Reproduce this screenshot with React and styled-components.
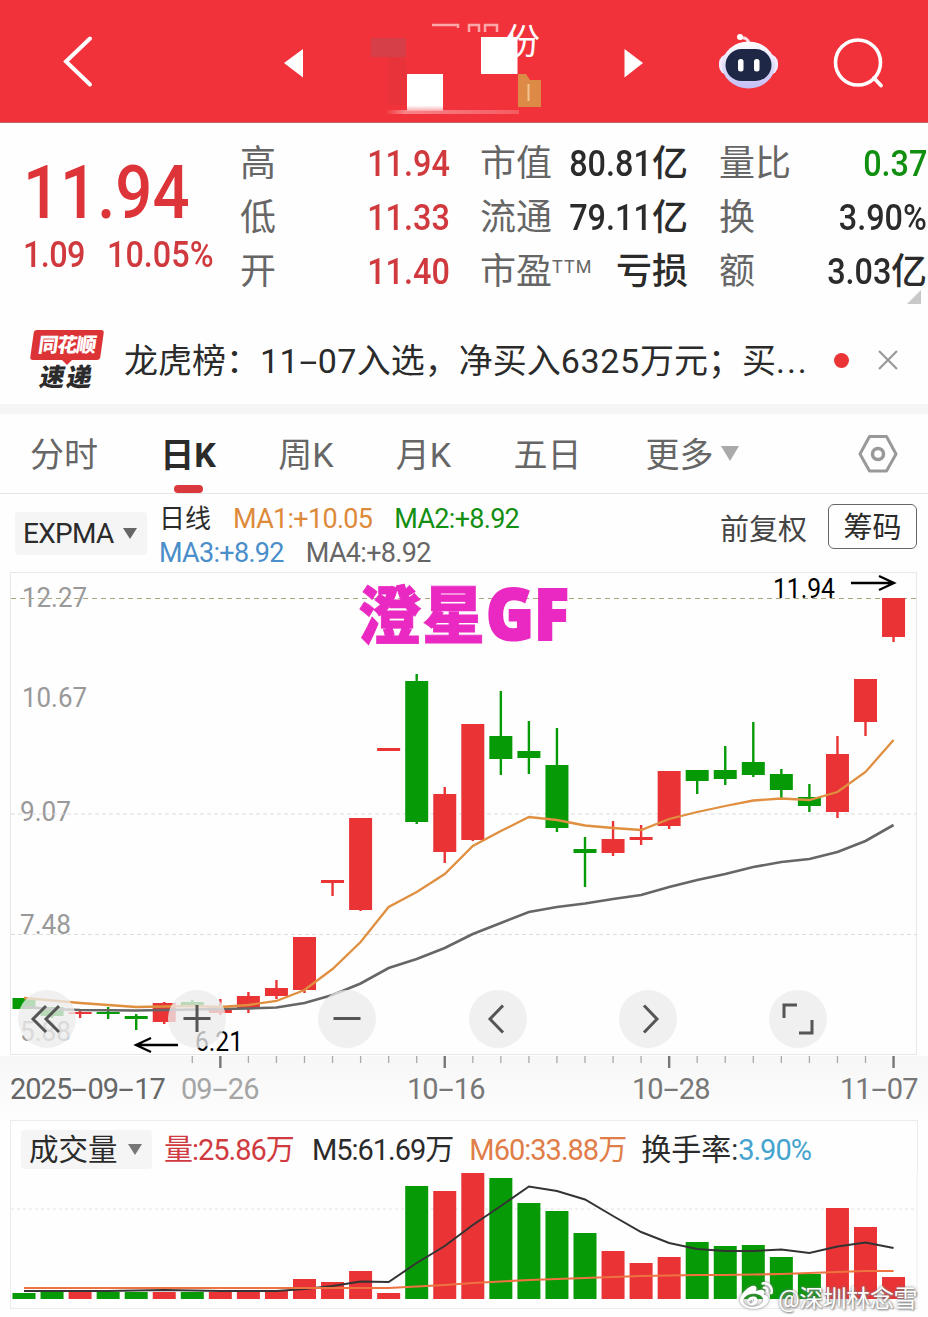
import React from 'react';
import styled, { createGlobalStyle } from 'styled-components';
import { FaWeibo } from 'react-icons/fa';

const FONT = `Roboto, 'Noto Sans CJK SC', sans-serif`;
const RED = '#e93335';
const GREEN = '#079a07';

const GlobalStyle = createGlobalStyle`
  body {
    margin: 0;
    background: #fefefe;
    font-family: ${FONT};
  }
`;

const Page = styled.div`
  width: 928px;
  height: 1317px;
  overflow: hidden;
`;

/* ---------- header ---------- */

const Header = styled.header`
  display: flex;
  height: 123px;
  background: #f1323a;
  border-bottom: 1px solid #b9656a;
  box-sizing: border-box;
`;

const HeaderArt = styled.svg`
  display: block;
  width: 928px;
  height: 122px;
`;

/* ---------- quote ---------- */

const Quote = styled.section`
  display: flex;
  height: 189px;
  padding-top: 14px;
  box-sizing: border-box;
`;

const PriceBlock = styled.div`
  width: 240px;
  flex-shrink: 0;
  padding-left: 23px;
  box-sizing: border-box;
  color: #dc3438;
`;

const Price = styled.div`
  margin-top: 19px;
  height: 72px;
  line-height: 72px;
  font-size: 75px;
  font-weight: 500;
  transform: scaleX(0.87);
  transform-origin: left;
`;

const Change = styled.div`
  display: flex;
  margin-top: 7px;
  line-height: 40px;
  font-size: 36px;
  font-weight: 500;
  color: #d0393d;
`;

const ChangeValue = styled.span`
  width: ${(p) => p.$width}px;
  letter-spacing: ${(p) => p.$ls || 0}px;
  transform: scaleX(0.9);
  transform-origin: left;
`;

const Stats = styled.div`
  display: flex;
  flex-shrink: 0;
`;

const StatsColumn = styled.div`
  display: flex;
  flex-direction: column;
  width: ${(p) => p.$width}px;
  margin-right: ${(p) => p.$gap || 0}px;
`;

const Stat = styled.div`
  display: flex;
  justify-content: space-between;
  height: 54px;
  line-height: 55px;
  font-size: 36px;
  color: #666;
  white-space: nowrap;
`;

const StatValue = styled.span`
  font-weight: 500;
  color: ${(p) => p.$color || '#2b2b2b'};
`;

const Num = styled.span`
  display: inline-block;
  transform: scaleX(0.9);
  transform-origin: right;
`;

const Han = styled.span`
  font-size: ${(p) => p.$size}px;
  letter-spacing: 0;
`;

const Sup = styled.span`
  font-size: 18px;
  letter-spacing: 1px;
  vertical-align: 11px;
  line-height: 1;
`;

const Corner = styled.div`
  width: 0;
  height: 0;
  margin: -9px 6px 0 auto;
  border-left: 14px solid transparent;
  border-bottom: 14px solid #c8c8c8;
`;

/* ---------- news ---------- */

const News = styled.section`
  display: flex;
  align-items: center;
  height: 88px;
  padding: 4px 29px 0 30px;
  border-bottom: 10px solid #f5f5f5;
`;

const Badge = styled.div`
  display: flex;
  flex-direction: column;
  align-items: center;
  width: 74px;
  margin-right: 20px;
`;

const BadgeTop = styled.div`
  width: 70px;
  height: 30px;
  line-height: 30px;
  background: #dc3436;
  border-radius: 3px;
  color: #fff;
  font-size: 20px;
  font-weight: 900;
  letter-spacing: -1px;
  text-align: center;
  transform: skewX(-8deg);
`;

const BadgePointer = styled.div`
  width: 0;
  height: 0;
  border: 5px solid transparent;
  border-top-color: #dc3436;
  border-bottom-width: 0;
`;

const BadgeBottom = styled.div`
  line-height: 25px;
  font-size: 25px;
  font-weight: 900;
  letter-spacing: 2px;
  color: #2b2b2b;
  transform: skewX(-10deg);
`;

const Headline = styled.div`
  width: 706px;
  padding-top: 2px;
  font-size: 34px;
  line-height: 50px;
  color: #2b2b2b;
  white-space: nowrap;
`;

const Digits = styled.span`
  letter-spacing: ${(p) => p.$ls}px;
`;

const Dash = styled.span`
  display: inline-block;
  width: 0.56em;
  text-align: center;
  letter-spacing: 0;
  transform: scaleX(1.9);
`;

const Dot = styled.div`
  width: 15px;
  height: 15px;
  margin: 0 29px 0 4px;
  border-radius: 50%;
  background: #ea3436;
`;

/* ---------- tabs ---------- */

const Tabs = styled.nav`
  display: flex;
  align-items: flex-start;
  height: 79px;
  padding: 0 30px;
  border-bottom: 1px solid #e6e6e6;
`;

const Tab = styled.div`
  display: flex;
  flex-direction: column;
  align-items: center;
  margin-right: ${(p) => p.$gap ?? 62.3}px;
  height: 79px;
  line-height: 82px;
  font-size: 34px;
  font-weight: ${(p) => (p.$active ? 700 : 400)};
  color: ${(p) => (p.$active ? '#2b2b2b' : '#666')};

  &::after {
    content: '';
    display: ${(p) => (p.$active ? 'block' : 'none')};
    width: 29px;
    height: 8px;
    margin-top: -11px;
    flex-shrink: 0;
    border-radius: 4px;
    background: #d9393c;
  }
`;

const Caret = styled.span`
  width: 0;
  height: 0;
  border: ${(p) => p.$size}px solid transparent;
  border-top: ${(p) => p.$tall}px solid ${(p) => p.$color};
  border-bottom: 0;
`;

const MoreCaret = styled(Caret)`
  margin: 32px 119px 0 7px;
`;

const Settings = styled.svg`
  margin-top: 20px;
`;

/* ---------- indicator row ---------- */

const Indicators = styled.section`
  display: flex;
  height: 78px;
  padding: 0 11px 0 15px;
`;

const Picker = styled.div`
  display: flex;
  align-items: center;
  justify-content: space-between;
  width: ${(p) => p.$width}px;
  height: ${(p) => p.$height}px;
  margin-top: ${(p) => p.$top}px;
  padding: 0 10px 0 8px;
  box-sizing: border-box;
  flex-shrink: 0;
  border-radius: 4px;
  background: #f5f5f5;
  font-size: ${(p) => p.$font}px;
  letter-spacing: ${(p) => p.$ls || 0}px;
  color: #2b2b2b;
`;

const Averages = styled.div`
  width: 561px;
  margin-left: 12px;
  padding-top: 8px;
`;

const AverageRow = styled.div`
  display: flex;
  height: 34px;
  line-height: 34px;
  gap: 22px;
  font-size: 27px;
  letter-spacing: -0.7px;
  white-space: nowrap;
`;

const Average = styled.span`
  color: ${(p) => p.$color};
`;

const Adjust = styled.div`
  width: 108px;
  line-height: 73px;
  font-size: 29px;
  color: #444;
`;

const ChipButton = styled.div`
  width: 89px;
  height: 45px;
  margin-top: 10px;
  box-sizing: border-box;
  border: 1.5px solid #666;
  border-radius: 6px;
  line-height: 46px;
  text-align: center;
  font-size: 29px;
  color: #2b2b2b;
`;

/* ---------- charts ---------- */

const PriceChart = styled.section`
  position: relative;
  height: 484px;
`;

const Plot = styled.svg`
  display: block;
  font-family: ${FONT};
`;

const Toolbar = styled.div`
  position: absolute;
  left: 18px;
  top: 418px;
  display: flex;
  gap: 92.2px;
`;

const RoundButton = styled.div`
  width: 58px;
  height: 58px;
  border-radius: 50%;
  background: rgba(236, 236, 236, 0.78);

  svg {
    display: block;
  }
`;

const Axis = styled.section`
  height: 64px;
  background: linear-gradient(#f7f7f7, #fdfdfd);
`;

const Dates = styled.div`
  display: grid;
  grid-template-columns: 171px 226px 225px 208px auto;
  padding-left: 10px;
  padding-top: 1px;
  line-height: 40px;
  font-size: 29px;
  letter-spacing: -1px;
  white-space: nowrap;
`;

const DateLabel = styled.span`
  color: ${(p) => p.$color || '#777'};
`;

const VolumePanel = styled.section`
  position: relative;
  height: 189px;
`;

const VolumeInfo = styled.div`
  display: flex;
  height: 53px;
  margin: 0 10px;
  padding-left: 10px;
  border: 1px solid #ececec;
  border-bottom: 0;
  box-sizing: border-box;
  line-height: 58px;
  font-size: 29px;
  letter-spacing: -1px;
  white-space: nowrap;
`;

const VolumeText = styled.span`
  margin-left: ${(p) => p.$gap}px;
  color: ${(p) => p.$color};
`;

const Watermark = styled.div`
  position: absolute;
  left: 740px;
  top: 158px;
  display: flex;
  align-items: center;
  gap: 5px;
  height: 36px;
  font-size: 24px;
  letter-spacing: -0.4px;
  color: #fff;
  white-space: nowrap;
  text-shadow: 0 0 3px #777, 1px 1px 2px #888;

  svg {
    filter: drop-shadow(0 0 1.5px #777);
  }
`;

const STEP = 28.05;
const xAt = (i) => 24 + STEP * i;

// [up, high, bodyTop, bodyBottom, low]
const candles = [
  [0, 998, 998, 1009, 1009],
  [0, 1007, 1007, 1016, 1018],
  [1, 1011, 1012, 1014, 1018],
  [0, 1007, 1012, 1014, 1019],
  [0, 1014, 1016, 1019, 1030],
  [1, 1002, 1003, 1022, 1024],
  [0, 1000, 1002, 1006, 1006],
  [1, 999, 1008, 1013, 1015],
  [1, 992, 996, 1008, 1013],
  [1, 980, 988, 996, 999],
  [1, 937, 937, 990, 993],
  [1, 880, 880, 883, 896],
  [1, 818, 818, 910, 911],
  [1, 748, 748, 751, 751],
  [0, 674, 681, 822, 824],
  [1, 787, 794, 852, 863],
  [1, 724, 724, 840, 841],
  [0, 691, 736, 759, 775],
  [0, 721, 751, 758, 774],
  [0, 728, 765, 828, 832],
  [0, 837, 849, 853, 887],
  [1, 821, 839, 853, 856],
  [1, 825, 837, 840, 845],
  [1, 771, 771, 826, 829],
  [0, 770, 770, 781, 794],
  [0, 746, 770, 779, 785],
  [0, 722, 762, 775, 777],
  [0, 769, 774, 790, 798],
  [0, 784, 797, 806, 812],
  [1, 736, 754, 812, 818],
  [1, 679, 679, 722, 736],
  [1, 598, 598, 637, 642],
];

const ma1 = [
  998, 1000.5, 1003, 1005, 1007, 1006.5, 1006, 1007, 1005, 1001, 990, 969, 942, 907, 892, 874, 846,
  831, 817, 820, 825.5, 828, 830, 819, 812, 806, 800.5, 798.5, 800, 792, 772, 740,
];

const ma4 = [
  1007, 1009, 1010, 1010.3, 1010.5, 1010, 1009.5, 1009, 1008.5, 1007.5, 1003, 995, 983.5, 968, 959,
  948, 934, 923, 912, 907, 903.5, 899, 895, 887, 880, 874, 867, 862, 859, 852, 841, 825,
];

// [up, top]
const volumes = [
  [0, 1293], [0, 1292], [1, 1292], [0, 1292], [0, 1292], [1, 1292], [0, 1292], [1, 1292],
  [1, 1292], [1, 1291], [1, 1279], [1, 1282], [1, 1271], [1, 1293], [0, 1186], [1, 1191],
  [1, 1173], [0, 1178], [0, 1203], [0, 1211], [0, 1233], [1, 1251], [1, 1263], [1, 1257],
  [0, 1242], [0, 1246], [0, 1245], [0, 1257], [0, 1274], [1, 1208], [1, 1227], [1, 1277],
];

const vol5 = [
  1291, 1291, 1291, 1291, 1290.5, 1290, 1290.5, 1291, 1291, 1291, 1289, 1286, 1281.5, 1282, 1263,
  1246, 1225, 1206, 1186.5, 1191, 1199.5, 1216, 1232, 1243, 1249, 1251, 1251, 1249.5, 1253, 1246.5,
  1242.5, 1248,
];

const vol60 = [
  1288, 1288, 1288, 1288, 1288, 1288, 1288, 1288, 1288, 1288, 1288, 1288, 1288, 1288, 1286.5, 1285,
  1283, 1281.5, 1280, 1279, 1278, 1277, 1276, 1275.5, 1275, 1275, 1274.5, 1274, 1273, 1272, 1271, 1271,
];

const line = (values) => values.map((y, i) => `${xAt(i)},${y}`).join(' ');

const priceLabels = [
  ['12.27', 22, 607, 65],
  ['10.67', 22, 707, 65],
  ['9.07', 20, 821, 51],
  ['7.48', 20, 934, 51],
  ['5.88', 20, 1041, 51],
];

const HeaderBar = () => (
  <Header>
    <HeaderArt viewBox="0 0 928 122">
      <defs>
        <linearGradient id="shell" x1="0" y1="0" x2="0" y2="1">
          <stop offset="0" stopColor="#fff" />
          <stop offset="1" stopColor="#c3bdf5" />
        </linearGradient>
        <linearGradient id="fade" x1="0" y1="0" x2="0" y2="1">
          <stop offset="0.85" stopColor="#fff" />
          <stop offset="1" stopColor="#f9a9ac" />
        </linearGradient>
        <linearGradient id="smear" x1="0" y1="0" x2="1" y2="0">
          <stop offset="0" stopColor="#fba7aa" stopOpacity="0" />
          <stop offset="0.15" stopColor="#fba7aa" />
          <stop offset="1" stopColor="#fba7aa" stopOpacity="0.5" />
        </linearGradient>
      </defs>
      <path d="M90 38.500 66 61.500 90 84.500" fill="none" stroke="#fff" strokeWidth="4" strokeLinecap="round" />
      <path d="M303 49v28.500L284 63z" fill="#fff" />
      <path d="M624.500 49v28.500L643 63z" fill="#fff" />

      {/* masked stock name */}
      <rect x="371" y="38" width="35" height="19" fill="#d63f47" />
      <rect x="388" y="57" width="18" height="48" fill="#e9333b" />
      <text x="505" y="54" fontSize="35" fill="#fff" fontFamily="Noto Sans CJK SC">份</text>
      <path d="M432 25h26v3M469 32v-7h10v7M485 32v-7h12v7" fill="none" stroke="#fba7aa" strokeWidth="2.500" />
      <rect x="407" y="74" width="36" height="37" fill="url(#fade)" />
      <rect x="481" y="37" width="36.500" height="37" fill="#fff" />
      <path d="M518 74h8l4 6h11v27h-23z" fill="#dd8a47" />
      <path d="M528.500 84v17" stroke="#f3c48f" strokeWidth="2" />
      <rect x="385" y="110" width="134" height="4" fill="url(#smear)" opacity="0.7" />

      {/* assistant robot */}
      <path d="M740 38q8-1 8.500 5" fill="none" stroke="#fbdfe6" strokeWidth="3" />
      <circle cx="740" cy="37" r="3" fill="#fff" />
      <rect x="719" y="54" width="59" height="21" rx="9" fill="#f1eaff" />
      <ellipse cx="748.500" cy="65" rx="26.500" ry="23.500" fill="url(#shell)" />
      <rect x="725.500" y="49" width="46" height="32" rx="16" fill="#1e2746" />
      <rect x="738" y="59" width="5.500" height="12.500" rx="2.500" fill="#fff" />
      <rect x="754" y="59" width="5.500" height="12.500" rx="2.500" fill="#fff" />

      <circle cx="858" cy="62.500" r="22.500" fill="none" stroke="#fff" strokeWidth="3.600" />
      <path d="m874 78 7 7.500" stroke="#fff" strokeWidth="3.800" strokeLinecap="round" />
    </HeaderArt>
  </Header>
);

const QuoteBlock = () => (
  <Quote>
    <PriceBlock>
      <Price>11.94</Price>
      <Change>
        <ChangeValue $width={84} $ls={-0.7}>1.09</ChangeValue>
        <ChangeValue>10.05%</ChangeValue>
      </Change>
    </PriceBlock>
    <Stats>
      <StatsColumn $width={210} $gap={30}>
        <Stat>高<StatValue $color="#d0393d"><Num>11.94</Num></StatValue></Stat>
        <Stat>低<StatValue $color="#d0393d"><Num>11.33</Num></StatValue></Stat>
        <Stat>开<StatValue $color="#d0393d"><Num>11.40</Num></StatValue></Stat>
      </StatsColumn>
      <StatsColumn $width={208} $gap={31}>
        <Stat>市值<StatValue><Num>80.81</Num>亿</StatValue></Stat>
        <Stat>流通<StatValue><Num>79.11</Num>亿</StatValue></Stat>
        <Stat>
          <span>市盈<Sup>TTM</Sup></span>
          <StatValue>亏损</StatValue>
        </Stat>
      </StatsColumn>
      <StatsColumn $width={208}>
        <Stat>量比<StatValue $color="#108f10"><Num>0.37</Num></StatValue></Stat>
        <Stat>换<StatValue><Num>3.90%</Num></StatValue></Stat>
        <Stat>额<StatValue><Num>3.03</Num>亿</StatValue></Stat>
        <Corner />
      </StatsColumn>
    </Stats>
  </Quote>
);

const NewsBar = () => (
  <News>
    <Badge>
      <BadgeTop>同花顺</BadgeTop>
      <BadgePointer />
      <BadgeBottom>速递</BadgeBottom>
    </Badge>
    <Headline>
      龙虎榜：<Digits $ls={0.3}>11<Dash>-</Dash>07</Digits>入选，净买入<Digits $ls={0.7}>6325</Digits>
      万元；买<Digits $ls={2}>...</Digits>
    </Headline>
    <Dot />
    <svg width="20" height="20" viewBox="0 0 20 20">
      <path d="M1 1l18 18M19 1 1 19" stroke="#999" strokeWidth="2.200" />
    </svg>
  </News>
);

const TabBar = () => (
  <Tabs>
    <Tab>分时</Tab>
    <Tab $active>日K</Tab>
    <Tab>周K</Tab>
    <Tab>月K</Tab>
    <Tab $gap={64}>五日</Tab>
    <Tab $gap={0}>更多</Tab>
    <MoreCaret $size={9} $tall={15} $color="#aaa" />
    <Settings width="40" height="40" viewBox="0 0 40 40" fill="none" stroke="#999">
      <path d="M11.500 2.500h17L38 20l-9.500 17h-17L2 20z" strokeWidth="3" strokeLinejoin="round" />
      <circle cx="20" cy="20" r="5.500" strokeWidth="3.500" />
    </Settings>
  </Tabs>
);

const IndicatorBar = () => (
  <Indicators>
    <Picker $width={132} $height={43} $top={18} $font={28} $ls={-0.7}>
      EXPMA
      <Caret $size={7.5} $tall={11} $color="#666" />
    </Picker>
    <Averages>
      <AverageRow>
        <Average $color="#2b2b2b"><Han $size={26}>日线</Han></Average>
        <Average $color="#dd8a3a">MA1:+10.05</Average>
        <Average $color="#138f13">MA2:+8.92</Average>
      </AverageRow>
      <AverageRow>
        <Average $color="#4a8ecb">MA3:+8.92</Average>
        <Average $color="#666">MA4:+8.92</Average>
      </AverageRow>
    </Averages>
    <Adjust>前复权</Adjust>
    <ChipButton>筹码</ChipButton>
  </Indicators>
);

const Candle = ({ index, data: [up, high, top, bottom, low] }) => {
  const x = xAt(index);
  const color = up ? RED : GREEN;
  return (
    <g fill={color}>
      <rect x={x - 1.2} y={high} width="2.400" height={low - high} />
      <rect x={x - 11.5} y={top} width="23" height={bottom - top} />
    </g>
  );
};

const toolIcons = [
  'M28 16 15 29 28 42M41 16 28 29 41 42',
  'M15.500 28.500h27M29 15v27',
  'M15.500 28.500h27',
  'M34 15.500 21 29 34 42.500',
  'M25 15.500 38 29 25 42.500',
  'M15 28V15h13M43 30v13H30',
];

const KLine = () => (
  <PriceChart>
    <Plot width="928" height="484" viewBox="0 572 928 484">
      <rect x="10.500" y="572.500" width="906" height="482" fill="none" stroke="#e8e8e8" />
      <g fill="#999" fontSize="28.500">
        {priceLabels.map(([label, x, y, width]) => (
          <text key={label} x={x} y={y} textLength={width} lengthAdjust="spacingAndGlyphs">{label}</text>
        ))}
      </g>
      <path d="M11 598.500h906" stroke="#aaa67c" strokeDasharray="5 4" />
      <path d="M11 814h906M11 934.500h906" stroke="#ddd" strokeDasharray="4 3" />
      {candles.map((c, i) => (
        <Candle key={i} index={i} data={c} />
      ))}
      <polyline points={line(ma4)} fill="none" stroke="#666" strokeWidth="2.600" />
      <polyline points={line(ma1)} fill="none" stroke="#df8f3f" strokeWidth="2.300" />
      <g fontSize="27" fill="#000">
        <text x="773" y="598" textLength="62" lengthAdjust="spacingAndGlyphs">11.94</text>
        <text x="195" y="1051" textLength="48" lengthAdjust="spacingAndGlyphs">6.21</text>
      </g>
      <g fill="none" stroke="#000" strokeWidth="2.300">
        <path d="M851 583h42M879 576l15 7-15 7" />
        <path d="M178 1045h-41M151 1038l-15 7 15 7" />
      </g>
      <g fill="#e929c1" stroke="#e929c1">
        <text x="358" y="638" fontSize="63" fontWeight="900" strokeWidth="0.800" textLength="127" fontFamily="Noto Sans CJK SC">澄星</text>
        <text x="486" y="640" fontSize="71" fontWeight="800" strokeWidth="2" textLength="83" lengthAdjust="spacingAndGlyphs" fontFamily="Open Sans">GF</text>
      </g>
    </Plot>
    <Toolbar>
      {toolIcons.map((d) => (
        <RoundButton key={d}>
          <svg width="58" height="58" fill="none" stroke="#555" strokeWidth="3">
            <path d={d} />
          </svg>
        </RoundButton>
      ))}
    </Toolbar>
  </PriceChart>
);

const DateAxis = () => (
  <Axis>
    <Plot width="928" height="12" viewBox="0 0 928 12">
      {candles.slice(6).map((_, i) => {
        const major = (i + 7) % 8 === 0;
        return (
          <path
            key={i}
            d={`M${xAt(i + 6)} 0v${major ? 12 : 7}`}
            stroke={major ? '#777' : '#aaa'}
            strokeWidth={major ? 2.4 : 1.3}
          />
        );
      })}
    </Plot>
    <Dates>
      <DateLabel $color="#666">2025<Dash>-</Dash>09<Dash>-</Dash>17</DateLabel>
      <DateLabel $color="#a5a5a5">09<Dash>-</Dash>26</DateLabel>
      <DateLabel>10<Dash>-</Dash>16</DateLabel>
      <DateLabel>10<Dash>-</Dash>28</DateLabel>
      <DateLabel>11<Dash>-</Dash>07</DateLabel>
    </Dates>
  </Axis>
);

const Volume = () => (
  <VolumePanel>
    <VolumeInfo>
      <Picker $width={131} $height={39} $top={9} $font={29.5}>
        成交量
        <Caret $size={7.5} $tall={11} $color="#777" />
      </Picker>
      <VolumeText $gap={12} $color="#cf3b40">量:25.86万</VolumeText>
      <VolumeText $gap={18} $color="#2b2b2b">M5:61.69万</VolumeText>
      <VolumeText $gap={16} $color="#e07d48">M60:33.88万</VolumeText>
      <VolumeText $gap={15} $color="#2b2b2b"><Han $size={30}>换手率</Han>:</VolumeText>
      <VolumeText $gap={1} $color="#45a3cf">3.90%</VolumeText>
    </VolumeInfo>
    <Plot width="928" height="136" viewBox="0 1173 928 136">
      <path d="M10.500 1173v136M917 1173v136M11 1308.500h906" stroke="#ececec" fill="none" />
      <path d="M11 1209h906" stroke="#e2e2e2" strokeDasharray="3 3" />
      {volumes.map(([up, top], i) => (
        <rect key={i} x={xAt(i) - 11.5} y={top} width="23" height={1299 - top} fill={up ? RED : GREEN} />
      ))}
      <polyline points={line(vol5)} fill="none" stroke="#333" strokeWidth="2" />
      <polyline points={line(vol60)} fill="none" stroke="#ee7340" strokeWidth="2.200" />
    </Plot>
    <Watermark>
      <FaWeibo size={33} />
      <span>@深圳林念雪</span>
    </Watermark>
  </VolumePanel>
);

const App = () => (
  <>
    <GlobalStyle />
    <Page>
      <HeaderBar />
      <QuoteBlock />
      <NewsBar />
      <TabBar />
      <IndicatorBar />
      <KLine />
      <DateAxis />
      <Volume />
    </Page>
  </>
);

export default App;
